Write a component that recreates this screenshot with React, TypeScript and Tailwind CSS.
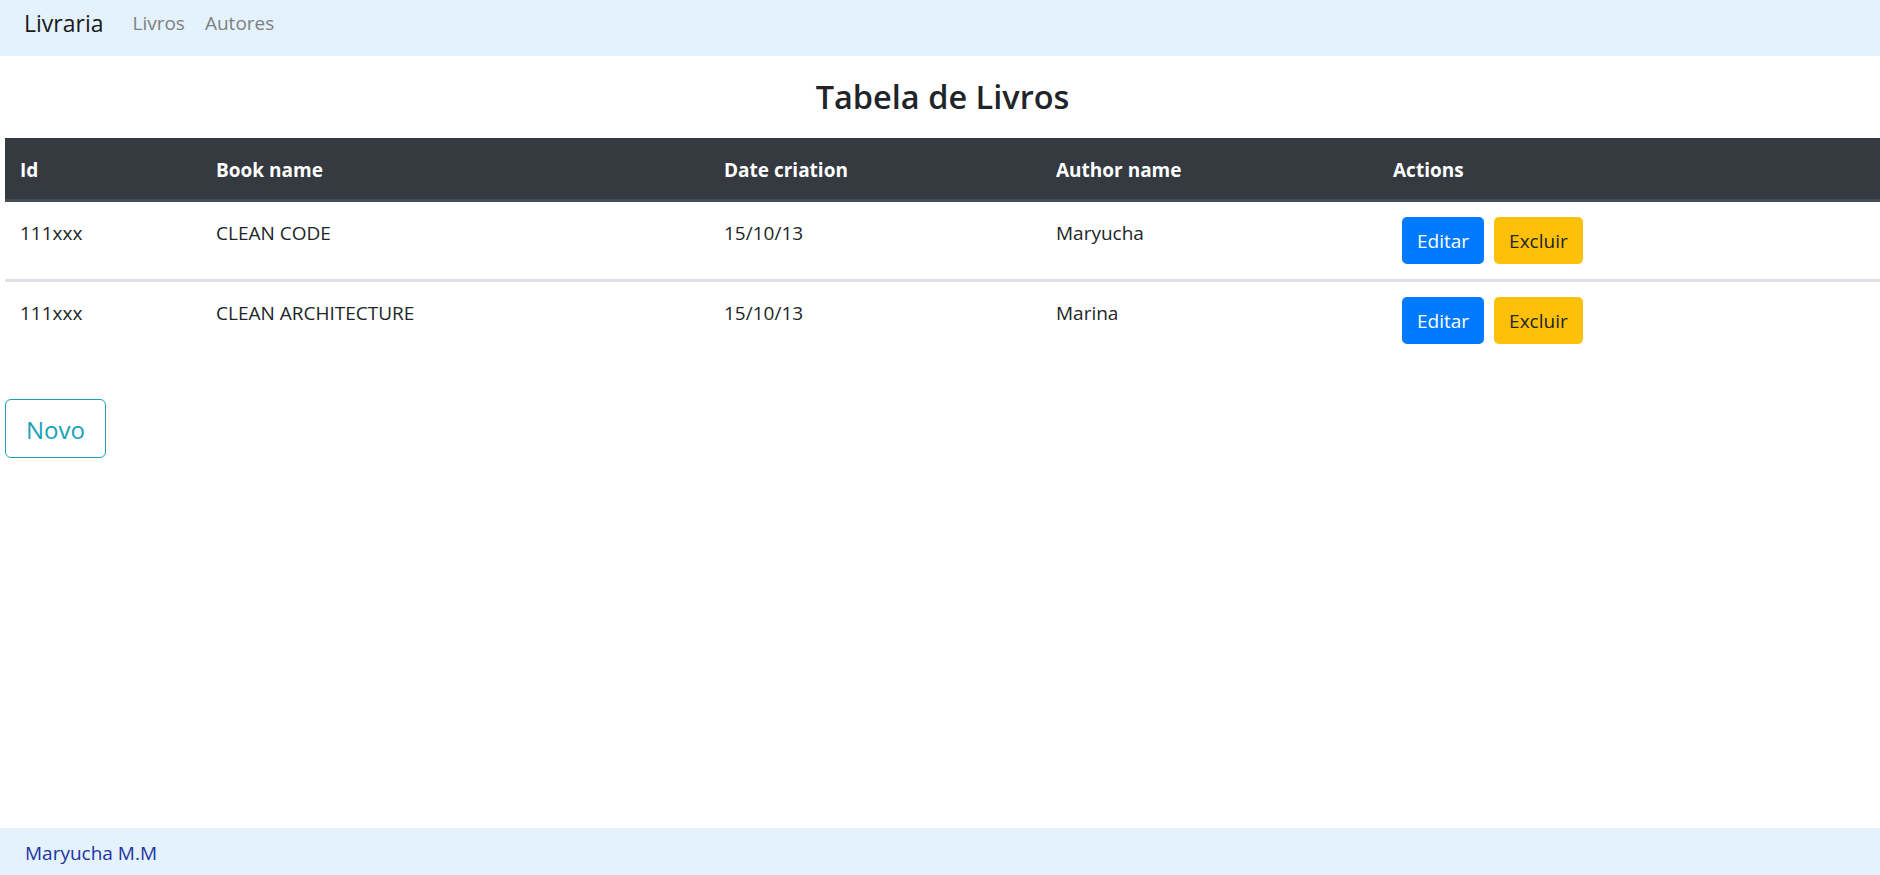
import { useState } from 'react';

type Book = {
  id: string;
  name: string;
  date: string;
  author: string;
};

const initialBooks: Book[] = [
  { id: '111xxx', name: 'CLEAN CODE', date: '15/10/13', author: 'Maryucha' },
  { id: '111xxx', name: 'CLEAN ARCHITECTURE', date: '15/10/13', author: 'Marina' },
];

const cols = 'grid grid-cols-[196px_508px_332px_337px_1fr]';

function Navbar() {
  return (
    <nav className="h-[56px] bg-[#e3f2fd] pt-[8px] pl-[24px] flex items-start leading-[30px]">
      <a href="#" className="text-[23px] text-[#1a1a1a] mr-[29px]">
        Livraria
      </a>
      <div className="flex gap-[20px] text-[19px] text-[#808080]">
        <a href="#">Livros</a>
        <a href="#">Autores</a>
      </div>
    </nav>
  );
}

function BookTable({ books, onDelete }: { books: Book[]; onDelete: (index: number) => void }) {
  return (
    <div className="w-full">
      <div className={`${cols} bg-[#343a40] text-white font-bold text-[19px] leading-[30px] border-b-[3px] border-[#454d55]`}>
        <div className="pl-[15px] pt-[17px] pb-[14px]">Id</div>
        <div className="pl-[15px] pt-[17px] pb-[14px]">Book name</div>
        <div className="pl-[15px] pt-[17px] pb-[14px]">Date criation</div>
        <div className="pl-[15px] pt-[17px] pb-[14px]">Author name</div>
        <div className="pl-[15px] pt-[17px] pb-[14px]">Actions</div>
      </div>
      {books.map((book, index) => (
        <div
          key={index}
          className={`${cols} text-[19px] leading-[30px] text-[#212529] ${index > 0 ? 'border-t-[3px] border-[#dee2e6]' : ''}`}
        >
          <div className="px-[15px] pt-[16px] pb-[14px]">{book.id}</div>
          <div className="px-[15px] pt-[16px] pb-[14px]">{book.name}</div>
          <div className="px-[15px] pt-[16px] pb-[14px]">{book.date}</div>
          <div className="px-[15px] pt-[16px] pb-[14px]">{book.author}</div>
          <div className="px-[15px] py-[15px] flex">
            <button className="ml-[9px] h-[47px] px-[15px] rounded-[5px] bg-[#007bff] text-white text-[19px] leading-[30px]">
              Editar
            </button>
            <button
              onClick={() => onDelete(index)}
              className="ml-[10px] h-[47px] px-[15px] rounded-[5px] bg-[#ffc107] text-[#212529] text-[19px] leading-[30px]"
            >
              Excluir
            </button>
          </div>
        </div>
      ))}
    </div>
  );
}

export default function App() {
  const [books, setBooks] = useState<Book[]>(initialBooks);

  return (
    <div className="min-h-screen flex flex-col bg-white font-['Open_Sans',sans-serif]">
      <Navbar />
      <main className="pl-[5px]">
        <h3 className="mt-[20px] mb-[20px] text-center text-[32.5px] leading-[42px] font-semibold text-[#212529]">
          Tabela de Livros
        </h3>
        <BookTable books={books} onDelete={(i) => setBooks(books.filter((_, j) => j !== i))} />
        <button className="mt-[40px] h-[59px] px-[20px] border border-[#17a2b8] rounded-[6px] text-[#17a2b8] text-[24px] leading-[37px] pt-[2px]">
          Novo
        </button>
      </main>
      <footer className="mt-auto h-[47px] bg-[#e3f2fd] pl-[25px] pt-[10px] text-[19px] leading-[30px] text-[#2533a3]">
        Maryucha M.M
      </footer>
    </div>
  );
}
